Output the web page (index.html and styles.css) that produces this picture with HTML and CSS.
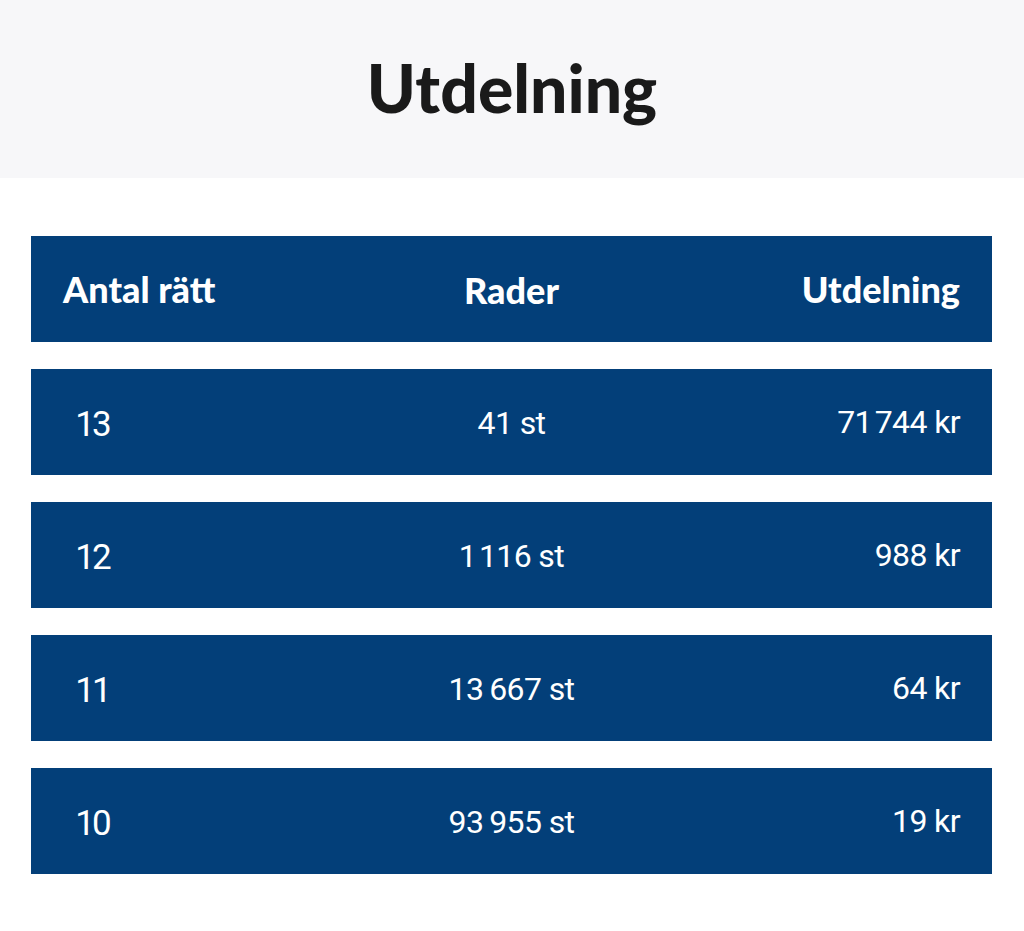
FILE: index.html
```html
<!DOCTYPE html>
<html lang="sv">
<head>
<meta charset="utf-8">
<title>Utdelning</title>
<link rel="stylesheet" href="styles.css">
</head>
<body>
<header class="hero">
  <h1 class="title">Utdelning</h1>
</header>
<main class="table">
  <div class="row head">
    <div class="c1">Antal rätt</div>
    <div class="c2">Rader</div>
    <div class="c3">Utdelning</div>
  </div>
  <div class="row">
    <div class="c1"><span class="num">13</span></div>
    <div class="c2">41 st</div>
    <div class="c3">71&#8202;744 kr</div>
  </div>
  <div class="row">
    <div class="c1"><span class="num">12</span></div>
    <div class="c2">1&#8202;116 st</div>
    <div class="c3">988 kr</div>
  </div>
  <div class="row">
    <div class="c1"><span class="num">11</span></div>
    <div class="c2">13&#8201;667 st</div>
    <div class="c3">64 kr</div>
  </div>
  <div class="row">
    <div class="c1"><span class="num">10</span></div>
    <div class="c2">93&#8201;955 st</div>
    <div class="c3">19 kr</div>
  </div>
</main>
</body>
</html>
```

FILE: styles.css
```css
* { box-sizing: border-box; }
html, body { margin: 0; padding: 0; background: #ffffff; }
body { font-family: Roboto, "Liberation Sans", sans-serif; }

.hero {
  height: 178px;
  background: #f7f7f9;
  display: flex;
  align-items: center;
  justify-content: center;
}
.title {
  margin: 0;
  font-family: Lato, "Open Sans", sans-serif;
  font-weight: 900;
  font-size: 66px;
  color: #1a1a1a;
  line-height: 1;
  padding-bottom: 2px;
}

.table {
  padding: 58px 32px 0 31px;
  display: flex;
  flex-direction: column;
  gap: 27px;
}
.row {
  height: 106px;
  background: #033f79;
  color: #ffffff;
  display: grid;
  grid-template-columns: 1fr 1fr 1fr;
  align-items: center;
  padding: 0 32px;
  font-size: 32px;
  letter-spacing: -0.6px;
}
.row .c1 { text-align: left; }
.row .c2 { text-align: center; padding-top: 2px; }
.row .c3 { text-align: right; }
.num {
  display: inline-block;
  width: 58px;
  text-align: center;
  padding-top: 4px;
  font-size: 35px;
  letter-spacing: -3px;
}

.row.head {
  font-family: Lato, "Open Sans", sans-serif;
  font-weight: 900;
  font-size: 36px;
  letter-spacing: 0;
}
```
